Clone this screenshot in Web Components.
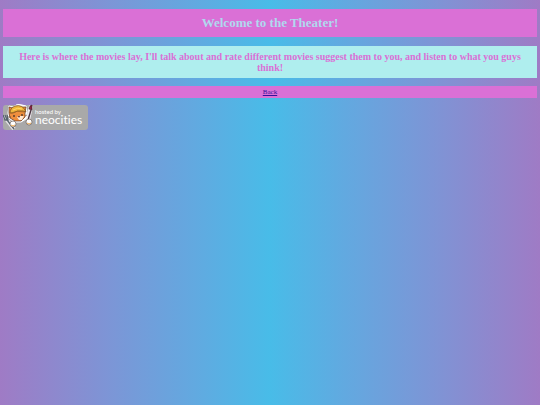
<!DOCTYPE html>
<html lang="en">
<head>
<meta charset="utf-8">
<title>Theater</title>
<style>
  html {
    min-height: 100%;
    background: linear-gradient(to right, #9f7bc5 0%, #7d95d6 20%, #62a9e0 36%, #48bce8 50%, #62a9e0 64%, #7d95d6 80%, #9f7bc5 100%);
  }
  body {
    margin: 9px 3px;
    font-family: "Liberation Serif", "Times New Roman", serif;
  }
</style>
</head>
<body>
<theater-page>
  <theater-title>Welcome to the Theater!</theater-title>
  <theater-intro>Here is where the movies lay, I'll talk about and rate different movies suggest them to you, and listen to what you guys think!</theater-intro>
  <back-link href="#">Back</back-link>
  <host-badge></host-badge>
</theater-page>

<script>
const pageTemplate = document.createElement("template");
pageTemplate.innerHTML = `
  <style>
    :host{
      display: flex;
      flex-direction: column;
    }
  </style>
  <slot></slot>
`;

const titleTemplate = document.createElement("template");
titleTemplate.innerHTML = `
  <style>
    :host{
      display: block;
      margin-bottom: 9px;
      padding: 6px;
      background: orchid;
      color: #b0d8ee;
    }
    h1{
      margin: 0;
      font-size: 13px;
      line-height: 16px;
      text-align: center;
    }
  </style>
  <h1><slot></slot></h1>
`;

const introTemplate = document.createElement("template");
introTemplate.innerHTML = `
  <style>
    :host{
      display: block;
      margin-bottom: 8px;
      padding: 5px;
      background: paleturquoise;
      color: orchid;
    }
    h2{
      margin: 0;
      font-size: 10px;
      line-height: 11px;
      text-align: center;
    }
  </style>
  <h2><slot></slot></h2>
`;

const backTemplate = document.createElement("template");
backTemplate.innerHTML = `
  <style>
    :host{
      display: block;
      margin-bottom: 7px;
      background: orchid;
    }
    p{
      margin: 0;
      font-size: 7px;
      line-height: 12px;
      text-align: center;
    }
    a{
      color: #35129a;
    }
  </style>
  <p><a><slot></slot></a></p>
`;

const badgeTemplate = document.createElement("template");
badgeTemplate.innerHTML = `
  <style>
    :host{
      display: flex;
    }
    a{
      display: flex;
    }
    text{
      fill: #fff;
      font-family: Lato, "Open Sans", sans-serif;
      font-variant-ligatures: none;
    }
  </style>
  <a href="#" aria-label="hosted by neocities">
    <svg width="85" height="25" viewBox="0 0 85 25" overflow="visible">
      <rect width="85" height="25" rx="3" fill="#a9a9a9"/>
      <!-- fork -->
      <path d="M1 11l3 4 7 9" fill="none" stroke="#e4e0e6" stroke-width="4"/>
      <path d="M0 10l2 5 3 0-1-5M2 10l2 5 7 9" fill="none" stroke="#56636c" stroke-width="1.3"/>
      <!-- brush -->
      <path d="M28 1L25 15" stroke="#f1ecf2" stroke-width="4"/>
      <path d="M28 5L25 15" stroke="#4a3540" stroke-width="1.4"/>
      <path d="M27 1l2-1v5l-3-1z" fill="#8c2441" stroke="#391b2b" stroke-width=".6"/>
      <!-- head -->
      <path d="M6 1l4 1q4-4 9-2l4 1 1 6-1 7-5 3h-7l-5-4-1-5z" fill="#fff" stroke="#fff"/>
      <path d="M6 2l4 1 11-1 2 0-1 6 0 4-4 4-6 0-5-3-1-5z" fill="#ee8e3d" stroke="#5d3522" stroke-width=".7"/>
      <path d="M7 8q0-5 5-7 8-2 11 6l-3-1q-6-1-10 2z" fill="#f0b63c" stroke="#70451e" stroke-width=".7"/>
      <path d="M10 5q5-3 9-1" fill="none" stroke="#ffd968"/>
      <path d="M8 8q6-3 13-1" fill="none" stroke="#9b6522" stroke-width=".7"/>
      <path d="M14 12l3-1 4 0-2 4-3 0z" fill="#ffe8d2"/>
      <path d="M11 10v2M19 9v2" stroke="#29242a" stroke-width="1.1"/>
      <path d="M15 11h2l-1 2z" fill="#4b2530"/>
      <path d="M5 12l3 0M22 11l2-1" stroke="#633b24" stroke-width=".6"/>
      <!-- paws -->
      <circle cx="10" cy="19" r="3" fill="#fff" stroke="#594941" stroke-width=".6"/>
      <path d="M8 20q2 2 4 0" fill="none" stroke="#e8a54c"/>
      <circle cx="26" cy="17" r="3" fill="#fff" stroke="#594941" stroke-width=".6"/>
      <path d="M24 18q2 2 4 0" fill="none" stroke="#e8a54c"/>
      <text x="32" y="9" font-size="6">hosted by</text>
      <text x="32" y="19" font-size="12">neocities</text>
    </svg>
  </a>
`;

class TheaterElement extends HTMLElement {
  constructor( template ) {
    super();
    this.attachShadow( {mode:"open"} );
    this.shadowRoot.appendChild( template.content.cloneNode(true) );
  }
}

class TheaterPage extends TheaterElement {
  constructor() { super( pageTemplate ); }
}

class TheaterTitle extends TheaterElement {
  constructor() { super( titleTemplate ); }
}

class TheaterIntro extends TheaterElement {
  constructor() { super( introTemplate ); }
}

class BackLink extends TheaterElement {
  constructor() { super( backTemplate ); }

  connectedCallback() {
    this.shadowRoot.querySelector("a").href = this.getAttribute("href");
  }
}

class HostBadge extends TheaterElement {
  constructor() { super( badgeTemplate ); }
}

window.customElements.define( "theater-page", TheaterPage );
window.customElements.define( "theater-title", TheaterTitle );
window.customElements.define( "theater-intro", TheaterIntro );
window.customElements.define( "back-link", BackLink );
window.customElements.define( "host-badge", HostBadge );
</script>
</body>
</html>
